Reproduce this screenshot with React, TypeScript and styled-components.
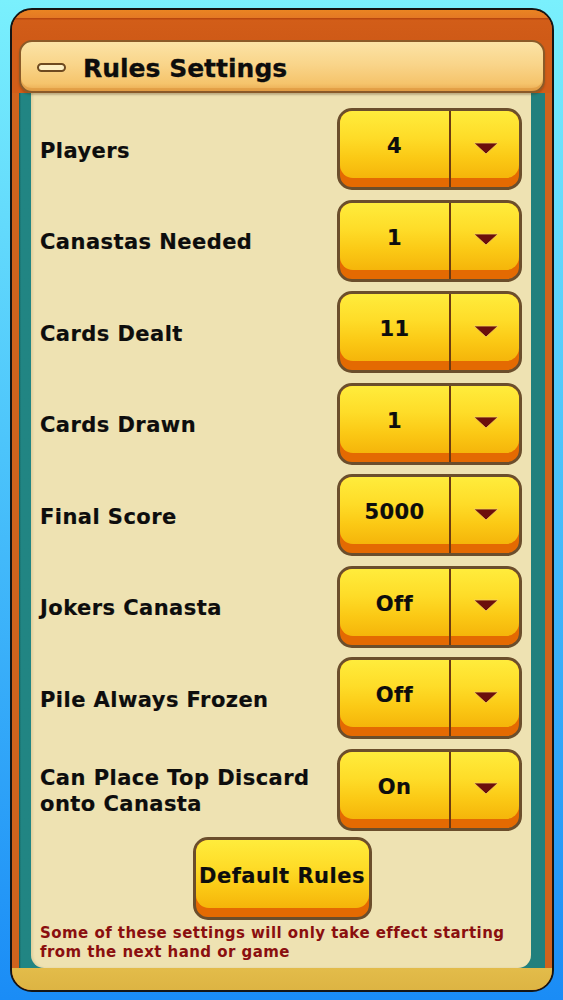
import React from "react";
import styled, { createGlobalStyle } from "styled-components";

const GlobalStyle = createGlobalStyle`
  html, body {
    margin: 0;
    padding: 0;
  }
  body {
    background: linear-gradient(180deg, #7af0fd 0%, #4cc4fb 45%, #1a8cf6 100%);
    min-height: 100vh;
    font-family: "DejaVu Sans", "Noto Sans", sans-serif;
  }
  * { box-sizing: border-box; }
`;

const Page = styled.div`
  width: 563px;
  height: 1000px;
  padding: 8px 0 0 10px;
`;

const Frame = styled.div`
  width: 544px;
  height: 984px;
  border: 2px solid #151515;
  border-radius: 22px;
  overflow: hidden;
  display: flex;
  flex-direction: column;
  background: #d25d18;
`;

const TopStrip = styled.div`
  height: 30px;
  flex: none;
  background: linear-gradient(
    180deg,
    #ea8422 0px,
    #e47824 8px,
    #b9470f 8px,
    #b9470f 9px,
    #d25d18 10px,
    #cf5a17 30px
  );
`;

const Header = styled.div`
  position: relative;
  z-index: 2;
  flex: none;
  height: 53px;
  margin: 0 7px;
  border: 2px solid #8a5a28;
  border-radius: 13px;
  background: linear-gradient(180deg, #fbe3a6 0%, #f9d58a 45%, #f5c46c 85%, #eaa950 100%);
  box-shadow: inset 0 -3px 0 rgba(214, 140, 50, 0.45), 0 2px 2px rgba(60, 30, 0, 0.25);
  display: flex;
  align-items: center;
  padding-left: 16px;
  gap: 17px;
`;

const Pill = styled.span`
  width: 29px;
  height: 9px;
  border: 2px solid #6e4a20;
  border-radius: 5px;
  background: #fcefc4;
  margin-top: 1px;
`;

const Title = styled.h1`
  margin: 0;
  padding-top: 3px;
  font-family: "DejaVu Sans", sans-serif;
  font-weight: bold;
  font-size: 25px;
  letter-spacing: 0;
  color: #0d0d0d;
  -webkit-text-stroke: 0.3px #0d0d0d;
`;

const Body = styled.div`
  flex: 1;
  display: flex;
  padding: 0 7px;
  background: #d0631d;
  min-height: 0;
`;

const Teal = styled.div`
  flex: 1;
  display: flex;
  padding: 0 14px 0 12px;
  background: linear-gradient(90deg, #145c5a 0px, #218583 2px, #22807d 100%);
`;

const Panel = styled.div`
  flex: 1;
  display: flex;
  flex-direction: column;
  padding: 15px 9px 6px;
  background: #eee2b2;
  border-radius: 0 0 13px 13px;
  box-shadow: inset 2px 0 2px rgba(120, 90, 30, 0.12);
`;

const List = styled.div`
  display: flex;
  flex-direction: column;
  gap: 9.57px;
`;

const Row = styled.div`
  height: 82px;
  display: flex;
  align-items: center;
  justify-content: space-between;
`;

const Label = styled.div`
  font-family: "DejaVu Sans", sans-serif;
  font-weight: bold;
  font-size: 21px;
  letter-spacing: 0.45px;
  line-height: 26px;
  color: #0d0d0d;
  -webkit-text-stroke: 0.2px #0d0d0d;
  padding-top: 3px;
`;

const YellowButton = styled.button`
  position: relative;
  overflow: hidden;
  border: 3px solid #6b4e2c;
  border-radius: 15px;
  background: #e46a02;
  padding: 0;
  cursor: pointer;
  font-family: "DejaVu Sans", sans-serif;
  font-weight: bold;
  font-size: 21px;
  letter-spacing: 0.4px;
  color: #0d0d0d;
  -webkit-text-stroke: 0.2px #0d0d0d;
  &::before {
    content: "";
    position: absolute;
    left: 0;
    right: 0;
    top: 0;
    bottom: 9px;
    border-radius: 0 0 13px 13px;
    background: linear-gradient(180deg, #ffec3c 0%, #fedc28 40%, #fbc915 70%, #f5b50a 100%);
  }
`;

const Dropdown = styled(YellowButton)`
  width: 185px;
  height: 82px;
  display: grid;
  grid-template-columns: 109px 1fr;
`;

const ValueCell = styled.span`
  position: relative;
  z-index: 1;
  display: flex;
  align-items: center;
  justify-content: center;
  padding-bottom: 6px;
`;

const ArrowCell = styled.span`
  position: relative;
  z-index: 1;
  display: flex;
  align-items: center;
  justify-content: center;
  border-left: 2px solid #6b3a12;
  padding-bottom: 2px;
  padding-left: 1px;
`;

const DefaultButton = styled(YellowButton)`
  align-self: center;
  width: 179px;
  height: 83px;
  margin-top: 6px;
  margin-left: 2px;
  letter-spacing: 0.5px;
`;

const ButtonText = styled.span`
  position: relative;
  z-index: 1;
  display: block;
  padding-bottom: 4px;
  white-space: nowrap;
`;

const Note = styled.p`
  margin: 4px 0 0;
  font-family: "DejaVu Sans", sans-serif;
  font-weight: bold;
  font-size: 15px;
  letter-spacing: 0.45px;
  line-height: 19px;
  color: #8a0f0f;
`;

const Gold = styled.div`
  flex: none;
  height: 22px;
  background: linear-gradient(180deg, #e3bc4a 0%, #ddb443 100%);
`;

const Arrow = () => (
  <svg width="26" height="13" viewBox="0 0 26 13" aria-hidden="true">
    <polygon points="1,1 25,1 13,12" fill="#6c0f0c" stroke="#f7d35a" strokeWidth="0.8" strokeLinejoin="round" />
  </svg>
);

const settings: { label: React.ReactNode; value: string }[] = [
  { label: "Players", value: "4" },
  { label: "Canastas Needed", value: "1" },
  { label: "Cards Dealt", value: "11" },
  { label: "Cards Drawn", value: "1" },
  { label: "Final Score", value: "5000" },
  { label: "Jokers Canasta", value: "Off" },
  { label: "Pile Always Frozen", value: "Off" },
  {
    label: (
      <>
        Can Place Top Discard
        <br />
        onto Canasta
      </>
    ),
    value: "On",
  },
];

export default function App() {
  return (
    <>
      <GlobalStyle />
      <Page>
        <Frame>
          <TopStrip />
          <Header>
            <Pill />
            <Title>Rules Settings</Title>
          </Header>
          <Body>
            <Teal>
              <Panel>
                <List>
                  {settings.map((s, i) => (
                    <Row key={i}>
                      <Label>{s.label}</Label>
                      <Dropdown type="button">
                        <ValueCell>{s.value}</ValueCell>
                        <ArrowCell>
                          <Arrow />
                        </ArrowCell>
                      </Dropdown>
                    </Row>
                  ))}
                </List>
                <DefaultButton type="button">
                  <ButtonText>Default Rules</ButtonText>
                </DefaultButton>
                <Note>
                  Some of these settings will only take effect starting from the next hand or game
                </Note>
              </Panel>
            </Teal>
          </Body>
          <Gold />
        </Frame>
      </Page>
    </>
  );
}
